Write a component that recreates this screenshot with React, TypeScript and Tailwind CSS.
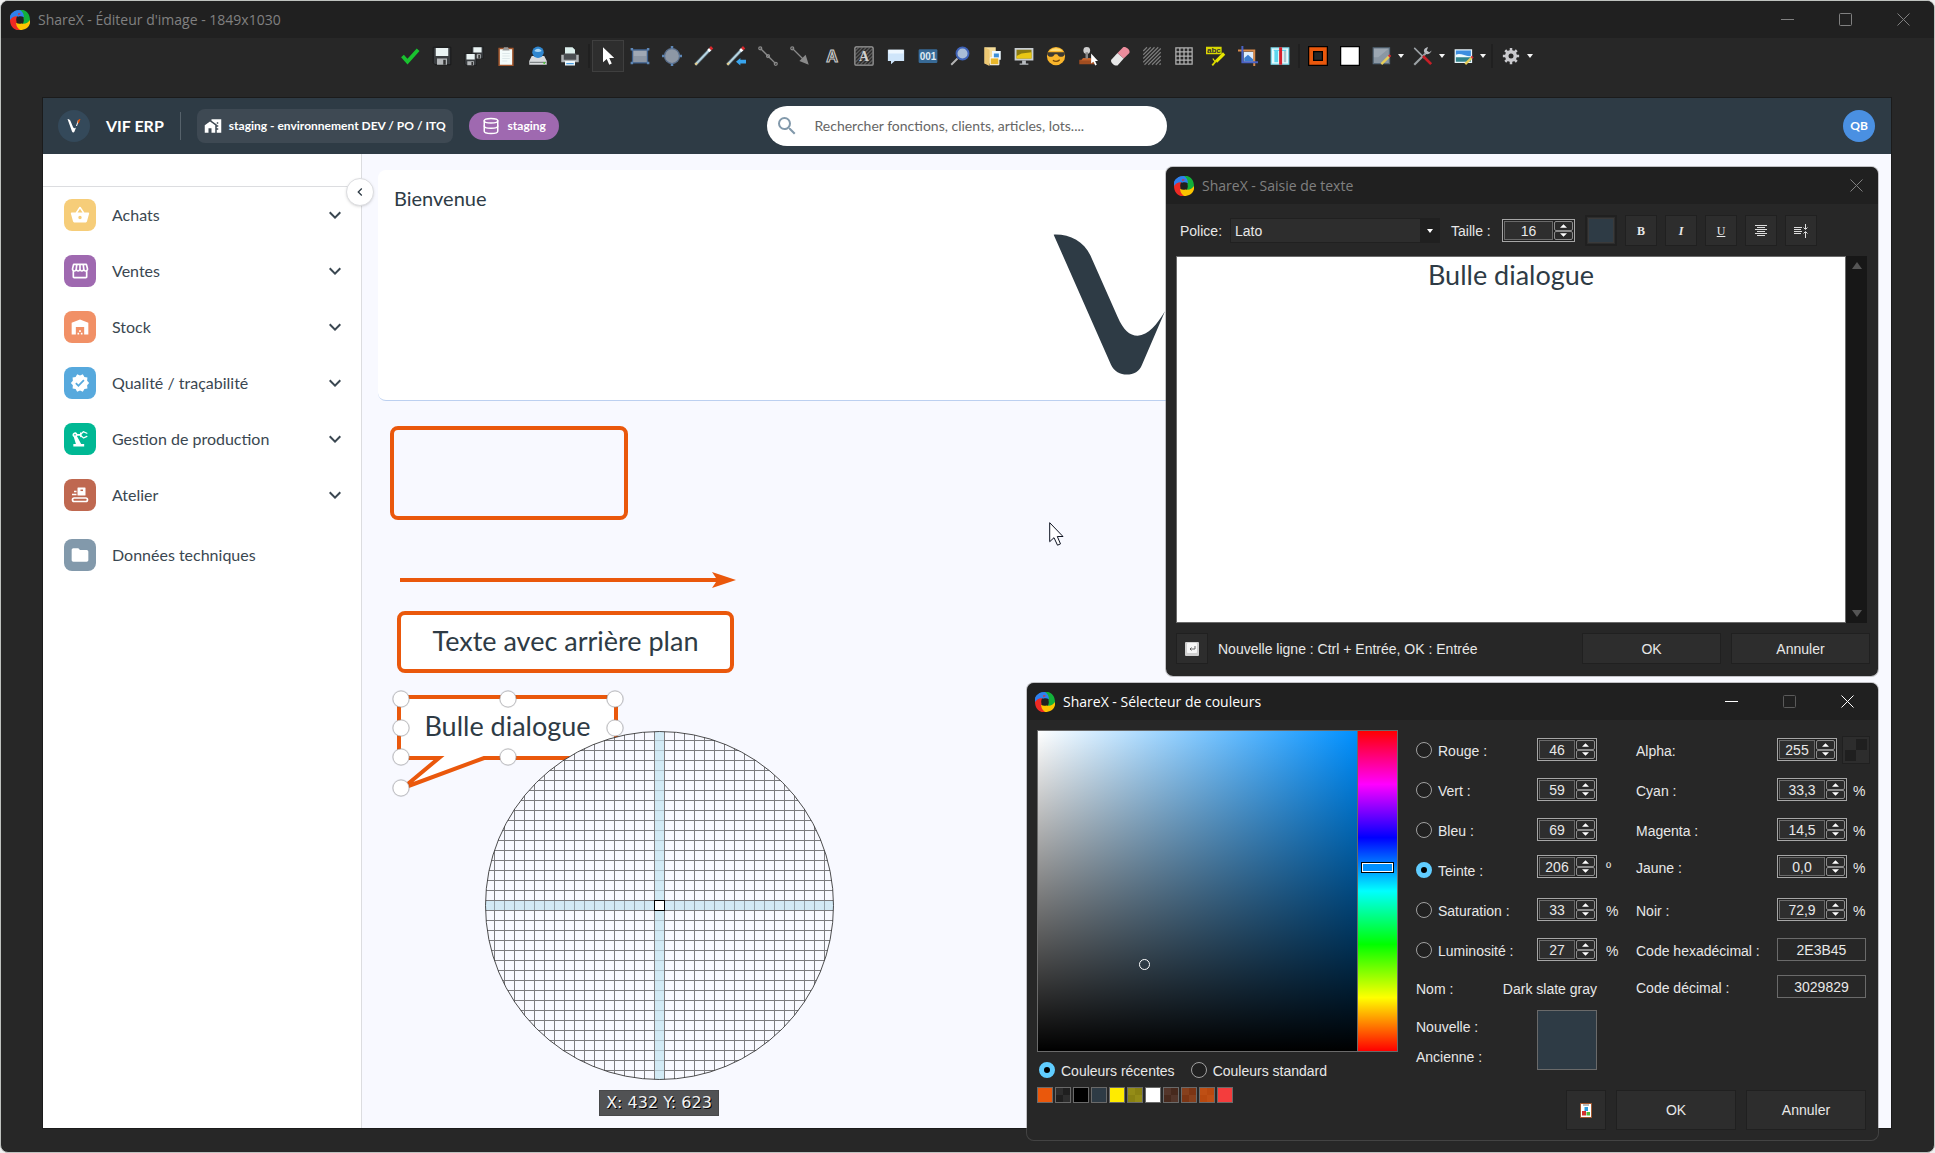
import React from "react";
import {
  MdFolder,
  MdHomeWork,
  MdKeyboardArrowDown,
  MdKeyboardArrowLeft,
  MdOutlineStorefront,
  MdPrecisionManufacturing,
  MdSearch,
  MdShoppingBasket,
  MdVerified,
  MdWarehouse,
} from "react-icons/md";
import { Database } from "lucide-react";

const ShareXLogo = () => (
  <svg viewBox="0 0 20 20" className="h-5 w-5 shrink-0">
    {[
      ["#2f80ed", 0],
      ["#12b03a", 90],
      ["#fcc400", 180],
      ["#ee2a24", 270],
    ].map(([color, angle]) => (
      <path
        key={color}
        d="M0 10 C-1 4 4 0 10 0 C16 0 19 5 16 11 C15 7 12 5.500 8.500 6.500 C5 5.500 2 7 0 10Z"
        fill={color as string}
        transform={`rotate(${angle} 10 10)`}
      />
    ))}
    <path d="M0 10 C-1 4 4 0 10 0 C8.500 2 8 4 8.500 6.500 C5 5.500 2 7 0 10Z" fill="#2f80ed" />
  </svg>
);

const Floppy = () => (
  <>
    <path d="M1 1h14v14H2.500L1 13.500Z" fill="#3a3d40" stroke="#111" strokeWidth=".6" />
    <path d="M3 1.500h10V8H3Z" fill="#eaf3f3" />
    <path d="M4 10h8v5H4Z" fill="#b5b8ba" />
    <path d="M9 11h2v4H9Z" fill="#333" />
  </>
);

const Pen = () => (
  <>
    <path d="M1 15 13 2.500" stroke="#55656f" strokeWidth="2.800" />
    <path d="M1.500 14.500 12.500 3" stroke="#b5d5e2" strokeWidth="1.600" />
    <path d="m11.500 4 1.500-1.500" stroke="#fff" strokeWidth="2.500" />
    <path d="m13 2.500 1.500-1.500" stroke="#d8282c" strokeWidth="2.600" />
    <path d="m1 15 1.500-1.500" stroke="#e9d08c" strokeWidth="1.600" />
  </>
);

const Hatch = () => (
  <path
    d="M1 4 4 1M1 7l6-6M1 10l9-9M1 13l12-12M2 15 15 2M5 15 15 5M8 15l7-7M11 15l4-4M14 15l1-1"
    stroke="#7d7d7d"
    strokeWidth=".9"
  />
);

const icons: Record<string, React.ReactNode> = {
  "Valider": <path d="m2 8 4 4.500L14.500 3" fill="none" stroke="#19c22f" strokeWidth="3" />,
  "Enregistrer": <Floppy />,
  "Enregistrer sous": (
    <>
      <g transform="translate(5.500 0) scale(.66)"><Floppy /></g>
      <g transform="translate(0 5.500) scale(.66)"><Floppy /></g>
    </>
  ),
  "Copier": (
    <>
      <path d="M2.500 2h11v13.500h-11Z" fill="#f4fbfb" stroke="#a3572d" strokeWidth="1.200" />
      <path d="M5 3.500 6.500 1h3L11 3.500Z" fill="#999" />
      <path d="M5 6h6M5 8h6M5 10h6M5 12h4" stroke="#d7e2e4" strokeWidth=".6" />
    </>
  ),
  "Envoyer": (
    <>
      <path d="M3 8h10l2 4v3H1v-3Z" fill="#d9dcde" />
      <path d="M1.500 13h13" stroke="#7f8486" />
      <circle cx="8" cy="5" r="4.600" fill="#2f86cf" />
      <path d="M5 4c2-3 5-2 6 0-2 1-4 1-6 0Z" fill="#a8d6f5" />
      <circle cx="13" cy="13.500" r=".8" fill="#4bc52f" />
    </>
  ),
  "Imprimer": (
    <>
      <path d="M4 1h6l2 2v4H4Z" fill="#dcefec" />
      <path d="M1 7h14v6H1Z" fill="#aeb2b5" />
      <path d="M3 6h10v5H3Z" fill="#4b4e52" />
      <path d="M4 12h8v3.500H4Z" fill="#edf6fa" />
      <path d="M5 14h6" stroke="#4b9de0" />
    </>
  ),
  "Sélection": <path d="M4 1v12l3-2.700L9 15l2-1-2-4.500h4Z" fill="#fff" />,
  "Rectangle": (
    <>
      <path d="M2 3h12v10.500H2Z" fill="#8d97a5" stroke="#3c5f8c" />
      <path d="M3 4h10v4H3Z" fill="#b3bac4" opacity=".5" />
      <path d="M.5 1.500h2v2h-2ZM13.500 1.500h2v2h-2ZM.5 12.500h2v2h-2ZM13.500 12.500h2v2h-2Z" fill="#5e86b5" />
    </>
  ),
  "Ellipse": (
    <>
      <circle cx="8" cy="8" r="6" fill="#8d97a5" stroke="#5a6f8c" />
      <path d="M7 0h2v2H7ZM7 14h2v2H7ZM0 7h2v2H0ZM14 7h2v2h-2Z" fill="#5e86b5" />
    </>
  ),
  "Dessin": <Pen />,
  "Flèche à main levée": (
    <>
      <Pen />
      <path d="m8 12.500 3.500-3V11H16v3h-4.500v1.500Z" fill="#39a5ee" />
    </>
  ),
  "Ligne": (
    <g fill="none" stroke="#8a8a8a">
      <path d="m2 2 12 12" />
      <circle cx="1.800" cy="1.800" r="1.200" />
      <circle cx="8" cy="8" r="1.200" />
      <circle cx="14.200" cy="14.200" r="1.200" />
    </g>
  ),
  "Flèche": (
    <g fill="none" stroke="#8a8a8a">
      <path d="m2 2 12 12" />
      <circle cx="1.800" cy="1.800" r="1.200" />
      <path d="m7.500 12 5-5 2.500 8Z" fill="#8a8a8a" stroke="none" />
    </g>
  ),
  "Texte contour": (
    <text x="8" y="13" textAnchor="middle" fontFamily="Liberation Sans" fontWeight="700" fontSize="13" fill="#222" stroke="#c9c9c9" strokeWidth=".9">A</text>
  ),
  "Texte": (
    <>
      <rect x=".7" y=".7" width="14.600" height="14.600" rx="1" fill="#2b2b2b" stroke="#a0a0a0" />
      <g opacity=".6"><Hatch /></g>
      <text x="8" y="12" textAnchor="middle" fontFamily="Liberation Serif" fontWeight="700" fontSize="11" fill="#d0d0d0">A</text>
    </>
  ),
  "Bulle": (
    <>
      <path d="M1.500 3h13v9H7l-3 2.500V12H1.500Z" fill="#cfe5fa" />
      <path d="M2 3h12v3H2Z" fill="#eef7ff" />
    </>
  ),
  "Étape": (
    <>
      <rect x=".5" y="2.500" width="15" height="11" rx="1" fill="#386a96" />
      <text x="8" y="11.300" textAnchor="middle" fontFamily="Liberation Sans" fontWeight="700" fontSize="8" fill="#dfe9f2">001</text>
    </>
  ),
  "Loupe": (
    <>
      <path d="m1 15 5-5" stroke="#b5b5b5" strokeWidth="1.500" />
      <circle cx="10" cy="6" r="4.800" fill="#a9bcd6" stroke="#3e62b8" strokeWidth="1.500" />
    </>
  ),
  "Image fichier": (
    <>
      <path d="M2 1h9v13H2Z" fill="#f5dc9a" />
      <path d="M8 4h7v7H8Z" fill="#eef8ff" />
      <path d="M9.500 6h4v4h-4Z" fill="#3d8fd6" />
      <path d="M6.500 9.500h7V15h-7Z" fill="#e8b72a" stroke="#fff" strokeWidth=".8" />
      <path d="m2 1 4 2v13l-4-2Z" fill="#edc873" />
    </>
  ),
  "Image écran": (
    <>
      <path d="M.5 1.500h15v10H.5Z" fill="#c9ced2" />
      <path d="M2 3h12v7H2Z" fill="#8a7a10" />
      <path d="M2 8 6 6l8-1v5H2Z" fill="#e9c714" />
      <path d="M6.500 11.500h3V14h2v1h-7v-1h2Z" fill="#b8bcc0" />
    </>
  ),
  "Émoji": (
    <>
      <circle cx="8" cy="8" r="7.300" fill="#f9b52b" />
      <path d="M3 4C5 1 11 1 13 4Z" fill="#fddb79" />
      <path d="M1 5h14v1.500C14 9.500 10 9 9 6.500H7C6 9 2 9.500 1 6.500Z" fill="#3d3a33" />
      <path d="M5.500 11.500c2 1.200 4 1 5.500-.5" stroke="#7a4b0b" fill="none" />
    </>
  ),
  "Curseur": (
    <>
      <path d="M1 11h12v3.500H1Z" fill="#a14d20" />
      <path d="M4 9.500h6l1.500 2h-9Z" fill="#c4632c" />
      <circle cx="7" cy="3.500" r="2.700" fill="#cfcfcf" />
      <path d="M6 5h2v5H6Z" fill="#888" />
      <path d="M10.500 6v8l1.800-1.500 1.500 3 1.200-.6-1.300-3H16Z" fill="#fff" />
    </>
  ),
  "Gomme": (
    <>
      <path d="m1 11 5-5.500 5 4.500-5 5.500c-2 1-6-2-5-4.500Z" fill="#e7e7e7" />
      <path d="m6 5.500 4.500-4.500c2-1 6 2 5 4.500L11 10Z" fill="#ec8d9d" />
    </>
  ),
  "Flou": <Hatch />,
  "Pixeliser": (
    <path d="M1.500 1.500h13v13h-13ZM1.500 4.700h13M1.500 8h13M1.500 11.200h13M4.700 1.500v13M8 1.500v13M11.200 1.500v13" fill="none" stroke="#b3b3b3" />
  ),
  "Surligner": (
    <>
      <path d="M0 .5h12.500v6H0Z" fill="#d9d800" />
      <text x="6.300" y="5.500" textAnchor="middle" fontFamily="Liberation Sans" fontWeight="700" fontSize="6.500" fill="#333">abc</text>
      <path d="m8 12.500 6.500-6.500" stroke="#e7e600" strokeWidth="2.600" />
      <path d="m7.500 13-2-3" stroke="#e7e600" strokeWidth="1" />
      <path d="m5 15.500 3-3.500" stroke="#d9d800" strokeWidth="1.500" />
    </>
  ),
  "Rogner": (
    <>
      <path d="M4.500 4.500h8v8h-8Z" fill="#dfefff" />
      <path d="M5 9.500 8 7l4 3.500V12H5Z" fill="#3c7fd0" />
      <path d="M0 3.500h13V16" fill="none" stroke="#d98a4a" strokeWidth="1.600" />
      <path d="M3.500 0v13H16" fill="none" stroke="#4a62c4" strokeWidth="1.600" />
    </>
  ),
  "Découper": (
    <>
      <path d="M1 1.500h14v13H1Z" fill="#e8fbff" stroke="#7edbee" />
      <path d="M3.500 4h3v9h-3Z" fill="#5ed5ee" />
      <path d="M3 3.500h10" stroke="#5ed5ee" />
      <path d="M11 4h2v9h-2Z" fill="#a8c8d0" />
      <path d="M8.500 1v14" stroke="#d5202b" strokeWidth="2.400" />
    </>
  ),
  "Couleur du contour": (
    <>
      <rect x=".5" y=".5" width="15" height="15" fill="#ea580c" stroke="#000" />
      <rect x="4.500" y="4.500" width="7" height="7" fill="#272727" stroke="#000" />
    </>
  ),
  "Couleur de fond": <rect x=".5" y=".5" width="15" height="15" fill="#fff" stroke="#000" />,
  "Options de forme": (
    <>
      <path d="M1 1.500h13v12.500H1Z" fill="#8a97a3" stroke="#566878" />
      <path d="M1.500 2h12L5 9H1.500Z" fill="#a9b3bc" opacity=".6" />
      <path d="m7.500 14.500 6-6" stroke="#e6cd58" strokeWidth="1.900" />
      <path d="m13.500 8.500 1.200-1.200" stroke="#d8282c" strokeWidth="2" />
    </>
  ),
  "Outils": (
    <>
      <path d="m1 15 9-9" stroke="#9da2a6" strokeWidth="1.700" />
      <path d="M15 3.500 13 5l-2-1.500L12 1c-2 0-4 2-3 4s4 2.500 6-1.500Z" fill="#b8bcc0" />
      <path d="m1 1.500 8 8" stroke="#9da2a6" strokeWidth="1.200" />
      <path d="m8 8 6.500 6.500" stroke="#c71f27" strokeWidth="2.200" />
    </>
  ),
  "Image": (
    <>
      <path d="M.5 2.500h14v11H.5Z" fill="#e9f5fb" />
      <path d="M1.500 3.500h12v5h-12Z" fill="#3d8ee0" />
      <path d="M1.500 7c4-2 8 2 12 1v2h-12Z" fill="#eefaff" />
      <path d="M1.500 9h12v3.500h-12Z" fill="#31838c" />
      <path d="m9 14.500 5-5" stroke="#e6cd58" strokeWidth="1.900" />
      <path d="m14 9.500 1-1" stroke="#d8282c" strokeWidth="2" />
    </>
  ),
  "Paramètres": (
    <>
      <circle cx="8" cy="8" r="3.300" fill="none" stroke="#c9c9cd" strokeWidth="3" />
      <path d="M8 1.500v13M1.500 8h13M3.400 3.400l9.200 9.200M12.600 3.400l-9.200 9.200" stroke="#c9c9cd" strokeWidth="2" />
      <circle cx="8" cy="8" r="2" fill="#272727" />
    </>
  ),
};

const toolGroups = [
  ["Valider", "Enregistrer", "Enregistrer sous", "Copier", "Envoyer", "Imprimer"],
  [
    "Sélection", "Rectangle", "Ellipse", "Dessin", "Flèche à main levée", "Ligne", "Flèche", "Texte contour",
    "Texte", "Bulle", "Étape", "Loupe", "Image fichier", "Image écran", "Émoji", "Curseur", "Gomme", "Flou",
    "Pixeliser", "Surligner", "Rogner", "Découper",
  ],
  ["Couleur du contour", "Couleur de fond", "Options de forme", "Outils", "Image"],
  ["Paramètres"],
];

const withMenu = ["Options de forme", "Outils", "Image", "Paramètres"];

const ToolButton = ({ name }: { name: string }) => (
  <button
    aria-label={name}
    className={
      "flex h-8 items-center " +
      (withMenu.includes(name) ? "w-[41px] pl-[6px]" : "w-8 justify-center") +
      (name === "Sélection" ? " border border-[#3f3f3f] bg-[#2e2e2e]" : "")
    }
  >
    <svg viewBox="0 0 16 16" className="h-5 w-5 shrink-0">{icons[name]}</svg>
    {withMenu.includes(name) && (
      <svg viewBox="0 0 6 4" className="ml-[6px] h-1 w-[6px] shrink-0">
        <path d="M0 0h6L3 4Z" fill="#f5f5f5" />
      </svg>
    )}
  </button>
);

const Toolbar = () => (
  <div className="flex h-[60px] items-start justify-center pt-[2px] pr-[6px]">
    {toolGroups.map((group, i) => (
      <React.Fragment key={i}>
        {i > 0 && <span className="mx-[2px] mt-1 h-6 w-[2px] bg-[#202020]" />}
        {group.map((name) => (
          <ToolButton key={name} name={name} />
        ))}
      </React.Fragment>
    ))}
  </div>
);

const CaptionIcon = ({ kind }: { kind: "min" | "max" | "close" }) => (
  <svg viewBox="0 0 13 13" className="h-[13px] w-[13px]" fill="none" stroke="currentColor">
    {kind === "min" && <path d="M0 6.500h13" />}
    {kind === "max" && <rect x=".5" y=".5" width="12" height="12" rx="1" />}
    {kind === "close" && <path d="m.5.5 12 12M12.500.5l-12 12" />}
  </svg>
);

const menu = [
  { label: "Achats", Icon: MdShoppingBasket, color: "bg-[#f6cd79]" },
  { label: "Ventes", Icon: MdOutlineStorefront, color: "bg-[#9f69b0]" },
  { label: "Stock", Icon: MdWarehouse, color: "bg-[#f19066]" },
  { label: "Qualité / traçabilité", Icon: MdVerified, color: "bg-[#57a9dd]" },
  { label: "Gestion de production", Icon: MdPrecisionManufacturing, color: "bg-[#00b894]" },
  { label: "Atelier", Icon: null, color: "bg-[#bf6850]" },
];

const ConveyorIcon = () => (
  <svg viewBox="0 0 20 20" className="h-5 w-5" fill="none" stroke="#fff">
    <rect x="2.500" y="13" width="15" height="3.500" rx="1.700" strokeWidth="1.700" />
    <rect x="7.500" y="2.500" width="8" height="8" rx=".5" fill="#fff" stroke="none" />
    <path d="M10.500 5.300h2.500" stroke="#bf6850" strokeWidth="1.500" />
    <path d="M4 6.500h2.500M2 9.500h4.500" strokeWidth="1.500" />
  </svg>
);

const AppHeader = () => (
  <header className="grid h-14 shrink-0 grid-cols-[1fr_400px_1fr] items-center bg-[#2e3b45] pr-4 pl-[15px] text-white">
    <div className="flex items-center">
      <span className="flex h-8 w-8 items-center justify-center rounded-full bg-[#34495a]">
        <svg viewBox="0 0 16 16" className="h-4 w-4">
          <path d="M1.500 1c2 0 2.500 1 3 2l2.500 6c.7 1.500 2 1.500 3 .5l-1.500 4c-.5 1.400-2 1.400-2.500 0Z" fill="#fff" />
          <path d="M12.500 2 10.500 8" stroke="#fff" strokeWidth="1" />
          <path d="M11.500 4.500c0-2 1-3.300 3-3.500l-1.800 4.500Z" fill="#ea580c" />
        </svg>
      </span>
      <span className="ml-4 text-base font-bold">VIF ERP</span>
      <span className="mx-4 h-7 w-px bg-[#56626b]" />
      <span className="flex h-[34px] items-center rounded-lg bg-[#3e4953] px-[7px] text-xs font-bold whitespace-nowrap">
        <MdHomeWork className="mr-[7px] h-[18px] w-[18px]" />
        staging - environnement DEV / PO / ITQ
      </span>
      <span className="ml-4 flex h-7 items-center rounded-full bg-[#9f69b0] px-[13px] text-xs font-bold">
        <Database className="mr-2 h-[18px] w-[18px]" />
        staging
      </span>
    </div>
    <label className="flex h-10 items-center rounded-full bg-white pr-4 pl-2">
      <MdSearch className="h-6 w-6 shrink-0 text-[#8299ab]" />
      <input
        type="search"
        aria-label="Rechercher"
        placeholder="Rechercher fonctions, clients, articles, lots...."
        className="ml-4 w-full text-sm outline-none placeholder:text-[#666]"
      />
    </label>
    <span className="flex h-8 w-8 items-center justify-center justify-self-end rounded-full bg-[#4a90e2] text-xs font-bold">QB</span>
  </header>
);

const Sidebar = () => (
  <nav className="relative w-[319px] shrink-0 border-r border-[#dcdde0] bg-white pt-8">
    <button
      aria-label="Réduire le menu"
      className="absolute top-6 -right-[13px] z-10 flex h-7 w-7 items-center justify-center rounded-full border border-[#dcdde0] bg-white text-[#2e3b45] shadow-sm"
    >
      <MdKeyboardArrowLeft className="h-4 w-4" />
    </button>
    <ul className="border-t border-[#dcdde0] text-base text-[#3a4751]">
      {menu.map(({ label, Icon, color }) => (
        <li key={label}>
          <button className="flex h-14 w-full items-center pr-[14px] pl-[21px]">
            <span className={"flex h-8 w-8 items-center justify-center rounded-lg text-white " + color}>
              {Icon ? <Icon className="h-5 w-5" /> : <ConveyorIcon />}
            </span>
            <span className="ml-4">{label}</span>
            <MdKeyboardArrowDown className="ml-auto h-6 w-6" />
          </button>
        </li>
      ))}
      <li>
        <a href="#donnees" className="flex h-16 items-center pl-[21px]">
          <span className="flex h-8 w-8 items-center justify-center rounded-lg bg-[#8299ab] text-white">
            <MdFolder className="h-5 w-5" />
          </span>
          <span className="ml-4">Données techniques</span>
        </a>
      </li>
    </ul>
  </nav>
);

const handles = [
  [401, 699], [508, 699], [615, 699],
  [401, 728], [615, 728],
  [401, 757], [508, 757],
  [401, 788],
];

const Annotations = () => (
  <>
    <div className="absolute top-[328px] left-[347px] h-[94px] w-[238px] rounded-lg border-4 border-[#ea580c]" />
    <svg viewBox="0 0 336 16" className="absolute top-[474px] left-[357px] h-4 w-[336px]">
      <path d="M0 6H316L312 0 336 8 312 16 316 10H0Z" fill="#ea580c" />
    </svg>
    <div className="absolute top-[513px] left-[354px] flex h-[62px] w-[337px] items-center justify-center rounded-lg border-4 border-[#ea580c] bg-white pb-[2px] text-[27px] text-[#2e3b45]">
      Texte avec arrière plan
    </div>
    <svg viewBox="388 686 240 116" className="absolute top-[588px] left-[345px] h-[116px] w-[240px]">
      <path d="M399 697H616V758H484L403 788 439 758H399Z" fill="#fff" stroke="#ea580c" strokeWidth="4" />
      {handles.map(([x, y]) => (
        <g key={`${x}-${y}`}>
          <circle cx={x} cy={y} r="9" fill="#000" opacity=".12" />
          <circle cx={x} cy={y} r="8" fill="#fff" stroke="#b9b9bd" strokeWidth=".8" />
        </g>
      ))}
    </svg>
    <div className="absolute top-[597px] left-[354px] flex h-[62px] w-[221px] items-center justify-center text-[27px] text-[#2e3b45]">
      Bulle dialogue
    </div>
  </>
);

const Magnifier = () => (
  <>
    <svg viewBox="0 0 349 349" className="absolute top-[633px] left-[442px] h-[349px] w-[349px]">
      <defs>
        <pattern id="pixels" width="10" height="10" patternUnits="userSpaceOnUse">
          <path d="M9.500 0v10M0 9.500h9" stroke="#000" strokeOpacity=".5" />
        </pattern>
        <clipPath id="lens">
          <circle cx="174.500" cy="174.500" r="174" />
        </clipPath>
      </defs>
      <g clipPath="url(#lens)">
        <rect width="349" height="349" fill="#f8f9ff" />
        <path d="M170 0h9v349h-9ZM0 170h349v9H0Z" fill="#d2e9f5" />
        <rect width="349" height="349" fill="url(#pixels)" />
        <path d="M170 0h9v349h-9Z" fill="#d2e9f5" opacity=".7" />
        <path d="M0 170h349v9H0Z" fill="#d2e9f5" opacity=".4" />
      </g>
      <rect x="169.500" y="169.500" width="10" height="10" fill="#fff" stroke="#000" />
      <circle cx="174.500" cy="174.500" r="174" fill="none" stroke="#222" strokeWidth=".8" />
    </svg>
    <div className="absolute top-[992px] left-[556px] flex h-[26px] w-[120px] items-center justify-center border border-[#47484a] bg-[#515254] font-['DejaVu_Sans',sans-serif] text-base whitespace-nowrap text-[#f2f2f2] [text-shadow:1px_1px_0_#000]">
      X: 432 Y: 623
    </div>
  </>
);

const Canvas = () => (
  <main className="relative mr-[43px] mb-6 ml-[42px] flex flex-1 flex-col overflow-hidden bg-[#f8f9ff] font-['Lato',sans-serif] shadow-[0_0_0_1px_#1b1b1b]">
    <AppHeader />
    <div className="flex flex-1">
      <Sidebar />
      <section className="flex-1 p-4">
        <div className="relative flex h-[231px] justify-center rounded-lg border-b border-[#bcd0f0] bg-white">
          <h1 className="absolute top-4 left-4 text-xl leading-6 text-[#2e3b45]">Bienvenue</h1>
          <svg viewBox="936 433 444 423" className="mt-16 h-[141px] w-[148px]">
            <path
              d="M938 435C985 433 1028 455 1048 497L1130 682C1148 722 1165 738 1190 738 1222 738 1248 704 1272 665L1203 825C1190 864 1127 865 1110 825Z"
              fill="#2e3b45"
            />
            <path d="M1290 640C1290 520 1310 440 1378 435Z" fill="#ea580c" />
          </svg>
        </div>
      </section>
    </div>
    <Annotations />
    <Magnifier />
    <svg viewBox="0 0 15 24" className="absolute top-[424px] left-[1006px] h-6 w-[15px]">
      <path d="M.7.7v19l4.300-4 3.500 7.500 3-1.300L8.300 14.500H14Z" fill="#fff" stroke="#0d1220" />
    </svg>
  </main>
);

const Triangle = ({ down }: { down?: boolean }) => (
  <svg viewBox="0 0 8 4" className="h-1 w-[7px]">
    <path d={down ? "M0 0h8L4 4Z" : "M0 4h8L4 0Z"} fill="#fff" />
  </svg>
);

const Spinner = ({ id, value, width, label }: { id: string; value: string; width: string; label?: string }) => (
  <span className={"flex h-[23px] shrink-0 border border-[#a6a6a6] bg-[#202020] p-px " + width}>
    <input
      id={id}
      aria-label={label}
      defaultValue={value}
      className="w-0 min-w-0 flex-1 border border-[#6a6a6a] bg-[#2e2e2e] text-center text-sm leading-4 text-[#e8e8e8] outline-none"
    />
    <span className="ml-px flex w-[19px] flex-col">
      <button aria-label="Augmenter" className="flex flex-1 items-center justify-center rounded-xs border border-[#8c8c8c] bg-[#2a2a2a]">
        <Triangle />
      </button>
      <button aria-label="Diminuer" className="flex flex-1 items-center justify-center rounded-xs border border-[#8c8c8c] bg-[#2a2a2a]">
        <Triangle down />
      </button>
    </span>
  </span>
);

const dialogButton = "flex items-center justify-center border border-[#202020] bg-[#2d2d2d]";

const formatButtons: [string, React.ReactNode][] = [
  ["Gras", <b className="font-['Liberation_Serif',serif]">B</b>],
  ["Italique", <b className="font-['Liberation_Serif',serif] italic">I</b>],
  ["Souligné", <span className="font-['Liberation_Serif',serif] underline">U</span>],
  [
    "Alignement horizontal",
    <svg viewBox="0 0 14 14" className="h-[14px] w-[14px]" stroke="#ddd">
      <path d="M1 1.500h12M3 3.500h8M1 5.500h12M3 7.500h8M1 9.500h12M3 11.500h8" />
    </svg>,
  ],
  [
    "Alignement vertical",
    <svg viewBox="0 0 14 14" className="h-[14px] w-[14px]" stroke="#ddd">
      <path d="M0 3.500h8M0 5.500h7M0 7.500h8M0 9.500h7M11.500 0v5M11.500 8v6M9.500 3.500l2 2 2-2M9.500 9.500l2-2 2 2" fill="none" />
    </svg>,
  ],
];

const TextDialog = () => (
  <section className="absolute top-[165px] right-[55px] w-[714px] overflow-hidden rounded-lg border border-[#6e6e6e]/40 bg-[#272727] bg-clip-padding text-sm text-[#e8e8e8]">
    <div className="flex h-[37px] items-center bg-[#202020] pl-2">
      <ShareXLogo />
      <h2 className="ml-2 font-['Open_Sans',sans-serif] text-sm text-[#808080]">ShareX - Saisie de texte</h2>
      <button aria-label="Fermer" className="ml-auto flex h-full w-11 items-center justify-center text-[#808080]">
        <CaptionIcon kind="close" />
      </button>
    </div>
    <div className="flex items-center px-[14px] pt-[11px]">
      <label htmlFor="font">Police:</label>
      <div className="relative ml-2 w-[210px]">
        <select id="font" className="h-[25px] w-full appearance-none border border-[#202020] bg-[#2d2d2d] pl-1">
          <option>Lato</option>
        </select>
        <span className="pointer-events-none absolute inset-y-0 right-0 flex w-5 items-center justify-center bg-[#202020]">
          <svg viewBox="0 0 6 4" className="h-1 w-[6px]"><path d="M0 0h6L3 4Z" fill="#fff" /></svg>
        </span>
      </div>
      <label htmlFor="size" className="ml-[11px] w-[41px] whitespace-nowrap">Taille :</label>
      <span className="mx-[10px] flex">
        <Spinner id="size" value="16" width="w-[73px]" />
      </span>
      <div className="flex gap-2 text-xs">
        <button aria-label="Couleur du texte" className="h-[31px] w-8 border-2 border-[#202020] bg-[#2d2d2d] p-px">
          <span className="block h-full border border-[#3a3a3a] bg-[#2e3b45]" />
        </button>
        {formatButtons.map(([label, content]) => (
          <button key={label} aria-label={label} className={dialogButton + " h-[31px] w-8"}>{content}</button>
        ))}
      </div>
    </div>
    <div className="mt-[10px] mr-[11px] ml-[10px] flex h-[367px]">
      <textarea
        aria-label="Texte"
        defaultValue="Bulle dialogue"
        className="flex-1 resize-none border border-[#6a6a6a] bg-white text-center font-['Lato',sans-serif] text-[27px] leading-9 text-[#2e3b45] outline-none"
      />
      <div className="flex w-[21px] flex-col items-center justify-between bg-[#171717] py-[6px]">
        <svg viewBox="0 0 10 7" className="h-[7px] w-[10px]"><path d="M5 0 10 7H0Z" fill="#555" /></svg>
        <svg viewBox="0 0 10 7" className="h-[7px] w-[10px]"><path d="M5 7 10 0H0Z" fill="#555" /></svg>
      </div>
    </div>
    <div className="flex items-center gap-[10px] px-2 pt-[10px] pb-3 pl-[10px]">
      <button aria-label="Mode de saisie" className={dialogButton + " h-[31px] w-8"}>
        <svg viewBox="0 0 14 14" className="h-[14px] w-[14px]">
          <rect width="14" height="14" rx="1" fill="#d0d0d0" />
          <rect x="2" y="1" width="10" height="10" rx="1" fill="#f7f7f7" />
          <path d="M10 4v3H5m1.500-1.500L5 7l1.500 1.500" fill="none" stroke="#555" strokeWidth=".9" />
        </svg>
      </button>
      <span>Nouvelle ligne : Ctrl + Entrée, OK : Entrée</span>
      <button className={dialogButton + " ml-auto h-[31px] w-[139px]"}>OK</button>
      <button className={dialogButton + " h-[31px] w-[139px]"}>Annuler</button>
    </div>
  </section>
);

const channels = [
  { id: "red", label: "Rouge :", value: "46", unit: "" },
  { id: "green", label: "Vert :", value: "59", unit: "" },
  { id: "blue", label: "Bleu :", value: "69", unit: "" },
  { id: "hue", label: "Teinte :", value: "206", unit: "º" },
  { id: "saturation", label: "Saturation :", value: "33", unit: "%" },
  { id: "brightness", label: "Luminosité :", value: "27", unit: "%" },
];

const inks = [
  { id: "cyan", label: "Cyan :", value: "33,3" },
  { id: "magenta", label: "Magenta :", value: "14,5" },
  { id: "yellow", label: "Jaune :", value: "0,0" },
  { id: "key", label: "Noir :", value: "72,9" },
];

// [color, second checker shade when the color is translucent]
const recent = [
  ["#ea580c", "#ea580c"],
  ["#2d2d2d", "#1f1f1f"],
  ["#000000", "#000000"],
  ["#2e3b45", "#2e3b45"],
  ["#ffeb00", "#ffeb00"],
  ["#948c17", "#8a8212"],
  ["#ffffff", "#ffffff"],
  ["#53352a", "#47291d"],
  ["#87401d", "#7c3514"],
  ["#bf4f14", "#b9490f"],
  ["#f43d3d", "#f43d3d"],
];

const radio =
  "h-4 w-4 shrink-0 appearance-none rounded-full border border-[#a0a0a0] bg-[#202020] checked:border-[5px] checked:border-[#60cdff] checked:bg-black";
const codeField = "h-[23px] w-[89px] border border-[#6a6a6a] bg-[#272727] text-center text-sm outline-none";
const fieldLabel = "pt-[2px] leading-[23px] whitespace-nowrap";

const Checker = ({ a, b }: { a: string; b: string }) => (
  <svg viewBox="0 0 2 2" className="h-full w-full" shapeRendering="crispEdges">
    <rect width="2" height="2" fill={a} />
    <path d="M1 0h1v1H1ZM0 1h1v1H0Z" fill={b} />
  </svg>
);

const ColorDialog = () => (
  <section className="absolute top-[681px] right-[55px] w-[853px] overflow-hidden rounded-lg border border-[#6e6e6e]/40 bg-[#272727] bg-clip-padding text-sm text-[#e8e8e8]">
    <div className="flex h-[37px] items-center bg-[#202020] pr-[2px] pl-2 text-white">
      <ShareXLogo />
      <h2 className="mr-auto ml-2 font-['Open_Sans',sans-serif] text-sm">ShareX - Sélecteur de couleurs</h2>
      <button aria-label="Réduire" className="flex h-full w-[58px] items-center justify-center"><CaptionIcon kind="min" /></button>
      <button aria-label="Agrandir" className="flex h-full w-[58px] items-center justify-center text-[#5a5a5a]"><CaptionIcon kind="max" /></button>
      <button aria-label="Fermer" className="flex h-full w-[58px] items-center justify-center"><CaptionIcon kind="close" /></button>
    </div>
    <div className="flex py-[10px] pl-[10px]">
      <div className="w-[361px]">
        <div className="flex h-[322px] border border-[#6a6a6a]">
          <div className="relative flex-1 bg-[linear-gradient(to_top,#000,transparent),linear-gradient(to_right,#fff,#0090ff)]">
            <span className="absolute top-[228px] left-[101px] h-[11px] w-[11px] rounded-full border border-white" />
          </div>
          <div className="relative w-10 border-l border-[#6a6a6a] bg-[linear-gradient(to_bottom,#f00,#f0f,#00f,#0ff,#0f0,#ff0,#f00)]">
            <span className="absolute inset-x-[3px] top-[131px] h-[11px] border border-black bg-[#0090ff] outline-1 -outline-offset-2 outline-white" />
          </div>
        </div>
        <div className="mt-[10px] flex h-4 items-center">
          <input type="radio" id="recent" name="palette" defaultChecked className={radio + " ml-[2px]"} />
          <label htmlFor="recent" className="ml-[6px] pt-[2px]">Couleurs récentes</label>
          <input type="radio" id="standard" name="palette" className={radio + " ml-4"} />
          <label htmlFor="standard" className="ml-[6px] pt-[2px]">Couleurs standard</label>
        </div>
        <div className="mt-[9px] flex gap-[2px]">
          {recent.map(([a, b]) => (
            <button key={a} aria-label={a} className="h-4 w-4 border border-[#6a6a6a]">
              <Checker a={a} b={b} />
            </button>
          ))}
        </div>
      </div>

      <div className="ml-[18px] flex-1 pt-2">
        <div className="flex">
          <div className="w-[220px]">
            <div className="flex">
              <div className="grid w-[121px] auto-rows-[40px]">
                {channels.map((c) => (
                  <div key={c.id} className="flex items-start">
                    <input type="radio" id={c.id} name="channel" defaultChecked={c.id === "hue"} className={radio + " mt-1"} />
                    <label htmlFor={c.id} className={"ml-[6px] " + fieldLabel}>{c.label}</label>
                  </div>
                ))}
              </div>
              <div className="grid grid-rows-[40px_40px_37px_43px_40px_37px]">
                {channels.map((c) => (
                  <div key={c.id} className="flex items-start">
                    <Spinner id={c.id + "-value"} label={c.label} value={c.value} width="w-[60px]" />
                    <span className={"ml-[9px] " + fieldLabel}>{c.unit}</span>
                  </div>
                ))}
              </div>
            </div>
            <div className="-mt-[2px] flex w-[181px] justify-between">
              <span className={fieldLabel}>Nom :</span>
              <span className={fieldLabel}>Dark slate gray</span>
            </div>
            <div className="mt-[9px] flex w-[181px] justify-between">
              <div className="pt-[2px] leading-[30px]">
                <p>Nouvelle :</p>
                <p>Ancienne :</p>
              </div>
              <div className="h-[60px] w-[60px] border border-[#6a6a6a] bg-[#2e3b45]" />
            </div>
          </div>

          <div className="grid flex-1 grid-cols-[141px_1fr] grid-rows-[40px_40px_37px_43px_40px_37px_23px] items-start">
            <label htmlFor="alpha" className={fieldLabel}>Alpha:</label>
            <div className="flex items-center">
              <Spinner id="alpha" value="255" width="w-[60px]" />
              <button aria-label="Transparent" className="-my-[3px] ml-[5px] h-7 w-7 border border-[#202020] bg-[#2d2d2d] p-[2px]">
                <Checker a="#2d2d2d" b="#1f1f1f" />
              </button>
            </div>
            {inks.map((ink) => (
              <React.Fragment key={ink.id}>
                <label htmlFor={ink.id} className={fieldLabel}>{ink.label}</label>
                <div className="flex items-start">
                  <Spinner id={ink.id} value={ink.value} width="w-[70px]" />
                  <span className={"ml-[6px] " + fieldLabel}>%</span>
                </div>
              </React.Fragment>
            ))}
            <label htmlFor="hex" className={fieldLabel}>Code hexadécimal :</label>
            <input id="hex" defaultValue="2E3B45" className={codeField} />
            <label htmlFor="decimal" className={fieldLabel}>Code décimal :</label>
            <input id="decimal" defaultValue="3029829" className={codeField} />
          </div>
        </div>
        <div className="mt-[18px] flex justify-end gap-[10px] pr-3">
          <button aria-label="Copier la couleur" className={dialogButton + " h-10 w-10"}>
            <svg viewBox="0 0 16 16" className="h-4 w-4">
              <path d="M2.500 1.500h11v14h-11Z" fill="#fff" stroke="#a3572d" />
              <path d="M5 2.500h6v1H5Z" fill="#777" />
              <path d="M6.500 5h3.500v4H6.500Z" fill="#2f9fe0" />
              <path d="M4 9h4v4.500H4Z" fill="#d5302f" />
              <path d="M8.500 10H12v3.500H8.500Z" fill="#53b83a" />
            </svg>
          </button>
          <button className={dialogButton + " h-10 w-[120px]"}>OK</button>
          <button className={dialogButton + " h-10 w-[120px]"}>Annuler</button>
        </div>
      </div>
    </div>
  </section>
);

const App = () => (
  <div className="h-screen min-h-[1153px] bg-[#f0f0f0] font-['Liberation_Sans',sans-serif]">
    <div className="relative flex h-full flex-col overflow-hidden rounded-lg border border-[#bfc2bf] bg-[#272727]">
      <div className="flex h-[37px] shrink-0 items-center bg-[#202020] pr-[2px] pl-[9px] text-[#808080]">
        <ShareXLogo />
        <h1 className="mr-auto ml-2 font-['Open_Sans',sans-serif] text-sm">ShareX - Éditeur d'image - 1849x1030</h1>
        <button aria-label="Réduire" className="flex h-full w-[58px] items-center justify-center"><CaptionIcon kind="min" /></button>
        <button aria-label="Agrandir" className="flex h-full w-[58px] items-center justify-center"><CaptionIcon kind="max" /></button>
        <button aria-label="Fermer" className="flex h-full w-[58px] items-center justify-center"><CaptionIcon kind="close" /></button>
      </div>
      <Toolbar />
      <Canvas />
      <TextDialog />
      <ColorDialog />
    </div>
  </div>
);

export default App;
